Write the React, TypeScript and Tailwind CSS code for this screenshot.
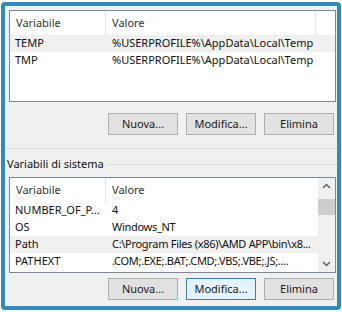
import React from "react";

const font = { fontFamily: '"Segoe UI", "Noto Sans", "Liberation Sans", sans-serif' };

type Row = { name: string; value: string; selected?: boolean };

const userVars: Row[] = [
  { name: "TEMP", value: "%USERPROFILE%\\AppData\\Local\\Temp", selected: true },
  { name: "TMP", value: "%USERPROFILE%\\AppData\\Local\\Temp" },
];

const systemVars: Row[] = [
  { name: "NUMBER_OF_P...", value: "4" },
  { name: "OS", value: "Windows_NT" },
  { name: "Path", value: "C:\\Program Files (x86)\\AMD APP\\bin\\x8...", selected: true },
  { name: "PATHEXT", value: ".COM;.EXE;.BAT;.CMD;.VBS;.VBE;.JS;...." },
];

function Button({ label, active }: { label: string; active?: boolean }) {
  return (
    <button
      className={
        active
          ? "w-[70px] h-[22px] border border-[#3c7fb1] bg-[#e5f1fb] text-[11px] text-[#1a1a1a]"
          : "w-[70px] h-[22px] border border-[#adadad] bg-[#e1e1e1] text-[11px] text-[#1a1a1a]"
      }
    >
      {label}
    </button>
  );
}

function Header({ third }: { third?: boolean }) {
  return (
    <div className="flex h-[24px] items-center text-[11px] text-[#333]">
      <div className="w-[96px] h-full pl-[6px] flex items-center border-r border-[#e5e5e5]">Variabile</div>
      <div className={third ? "w-[210px] h-full pl-[6px] flex items-center border-r border-[#e5e5e5]" : "flex-1 pl-[6px]"}>
        Valore
      </div>
    </div>
  );
}

function Rows({ rows, tight }: { rows: Row[]; tight?: boolean }) {
  return (
    <div className="flex flex-col">
      {rows.map((r) => (
        <div
          key={r.name}
          className={
            r.selected
              ? "flex h-[17px] items-center text-[11px] text-[#111] bg-[#f0f0f0]"
              : "flex h-[17px] items-center text-[11px] text-[#111]"
          }
        >
          <div className="w-[96px] pl-[5px] whitespace-nowrap overflow-hidden">{r.name}</div>
          <div className={tight ? "flex-1 pl-[6px] whitespace-nowrap tracking-[-0.3px]" : "flex-1 pl-[6px] whitespace-nowrap"}>
            {r.value}
          </div>
        </div>
      ))}
    </div>
  );
}

export default function App() {
  return (
    <div className="w-[342px] h-[312px] bg-white pt-[2px] pl-[1px]" style={font}>
      <div className="w-[340px] h-[308px] border-4 border-[#2c8dbd] rounded-[4px] bg-[#f0f0f0] flex flex-col">
        {/* user variables */}
        <div className="pt-[4px] pl-[4px] pr-[1px]">
          <div className="h-[92px] border border-[#828790] bg-white">
            <Header third />
            <Rows rows={userVars} />
          </div>
        </div>
        <div className="flex justify-end gap-[8px] pr-[3px] mt-[11px]">
          <Button label="Nuova..." />
          <Button label="Modifica..." />
          <Button label="Elimina" />
        </div>
        <div className="mt-[13px] border-t border-[#dcdcdc]" />

        {/* system variables */}
        <div className="flex items-center mt-[7px] pl-[2px] h-[16px]">
          <span className="text-[11px] text-[#111] pr-[3px]">Variabili di sistema</span>
          <div className="flex-1 border-t border-[#dcdcdc]" />
        </div>
        <div className="pt-[5px] pl-[4px] pr-[1px]">
          <div className="h-[96px] border border-[#828790] bg-white flex">
            <div className="flex-1 flex flex-col">
              <Header />
              <Rows rows={systemVars} tight />
            </div>
            <div className="w-[17px] bg-[#f0f0f0] flex flex-col items-center">
              <svg width="17" height="17" viewBox="0 0 17 17">
                <path d="M5 10 L8.5 6.5 L12 10" fill="none" stroke="#606060" strokeWidth="1.5" />
              </svg>
              <div className="w-[17px] h-[16px] bg-[#cdcdcd] mt-[4px]" />
              <div className="flex-1" />
              <svg width="17" height="17" viewBox="0 0 17 17">
                <path d="M5 7 L8.5 10.5 L12 7" fill="none" stroke="#606060" strokeWidth="1.5" />
              </svg>
            </div>
          </div>
        </div>
        <div className="flex justify-end gap-[8px] pr-[3px] mt-[5px]">
          <Button label="Nuova..." />
          <Button label="Modifica..." active />
          <Button label="Elimina" />
        </div>
      </div>
    </div>
  );
}
